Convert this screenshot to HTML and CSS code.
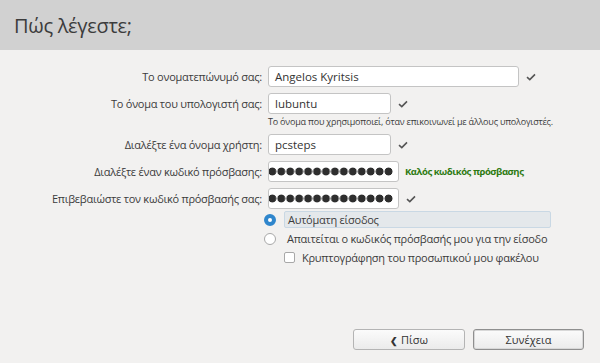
FILE: index.html
```html
<!DOCTYPE html>
<html lang="el">
<head>
    <meta charset="UTF-8">
    <title>Πώς λέγεστε;</title>
    <link rel="stylesheet" href="styles.css">
</head>
<body>
    <div class="titleBar">Πώς λέγεστε;</div>

    <div class="formArea">
        <div class="row">
            <label class="rowLabel">Το ονοματεπώνυμό σας:</label>
            <div class="field wide">Angelos Kyritsis</div>
            <svg class="check" width="10" height="8" viewBox="0 0 10 8"><path d="M1 4.2 L3.8 6.6 L9 1.4" fill="none" stroke="#555" stroke-width="1.6"/></svg>
        </div>
        <div class="row">
            <label class="rowLabel">Το όνομα του υπολογιστή σας:</label>
            <div class="field short">lubuntu</div>
            <svg class="check" width="10" height="8" viewBox="0 0 10 8"><path d="M1 4.2 L3.8 6.6 L9 1.4" fill="none" stroke="#555" stroke-width="1.6"/></svg>
        </div>
        <div class="hint">Το όνομα που χρησιμοποιεί, όταν επικοινωνεί με άλλους υπολογιστές.</div>
        <div class="row">
            <label class="rowLabel">Διαλέξτε ένα όνομα χρήστη:</label>
            <div class="field short">pcsteps</div>
            <svg class="check" width="10" height="8" viewBox="0 0 10 8"><path d="M1 4.2 L3.8 6.6 L9 1.4" fill="none" stroke="#555" stroke-width="1.6"/></svg>
        </div>
        <div class="row">
            <label class="rowLabel">Διαλέξτε έναν κωδικό πρόσβασης:</label>
            <div class="field pass"><span class="dots"></span></div>
            <span class="strength">Καλός κωδικός πρόσβασης</span>
        </div>
        <div class="row">
            <label class="rowLabel">Επιβεβαιώστε τον κωδικό πρόσβασής σας:</label>
            <div class="field pass"><span class="dots"></span></div>
            <svg class="check" width="10" height="8" viewBox="0 0 10 8"><path d="M1 4.2 L3.8 6.6 L9 1.4" fill="none" stroke="#555" stroke-width="1.6"/></svg>
        </div>

        <div class="options">
            <div class="option">
                <span class="radio on"></span>
                <span class="optionText focus">Αυτόματη είσοδος</span>
            </div>
            <div class="option">
                <span class="radio"></span>
                <span class="optionText">Απαιτείται ο κωδικός πρόσβασής μου για την είσοδο</span>
            </div>
            <div class="option sub">
                <span class="checkbox"></span>
                <span class="optionText">Κρυπτογράφηση του προσωπικού μου φακέλου</span>
            </div>
        </div>
    </div>

    <div class="buttons">
        <button class="navButton"><span class="arrow">&#10094;</span> Πίσω</button>
        <button class="navButton primary">Συνέχεια</button>
    </div>
</body>
</html>
```

FILE: styles.css
```css
body {
    margin: 0;
    width: 600px;
    height: 363px;
    overflow: hidden;
    background-color: #f2f1f0;
    font-family: 'Open Sans', 'Noto Sans', sans-serif;
    color: #3c3c3c;
}

.titleBar {
    height: 50px;
    box-sizing: border-box;
    padding: 12px 0 0 14px;
    background-color: #d1d1d1;
    font-size: 20px;
    letter-spacing: -0.3px;
    color: #3c3c3c;
}

.formArea {
    padding-top: 16px;
}

.row {
    display: flex;
    align-items: center;
    height: 21px;
    margin-bottom: 6px;
}

.rowLabel {
    width: 268px;
    padding-right: 6px;
    box-sizing: border-box;
    text-align: right;
    font-size: 11px;
    letter-spacing: -0.25px;
    color: #3c3c3c;
}

.field {
    height: 21px;
    box-sizing: border-box;
    border: 1px solid #c4c4c4;
    border-radius: 3px;
    background-color: #fff;
    padding: 0 6px;
    font-size: 11.5px;
    line-height: 19px;
    color: #333;
    overflow: hidden;
    white-space: nowrap;
}

.wide {
    width: 251px;
}

.short {
    width: 123px;
}

.pass {
    width: 131px;
    display: flex;
    align-items: center;
    justify-content: flex-end;
    padding: 0 5px 0 0;
}

/* masked password characters */
.dots {
    width: 124px;
    height: 9px;
    background-image: radial-gradient(circle, #2e2e2e 3.6px, transparent 4.3px);
    background-size: 8.95px 9px;
    background-position: right center;
    background-repeat: repeat-x;
}

.check {
    margin-left: 7px;
}

.strength {
    margin-left: 6px;
    font-size: 9.5px;
    font-weight: bold;
    color: #2e7a12;
    letter-spacing: -0.45px;
}

.hint {
    margin: -5px 0 6px 268px;
    font-size: 9px;
    letter-spacing: -0.2px;
    color: #3c3c3c;
}

.options {
    margin-left: 264px;
    margin-top: -4px;
}

.option {
    display: flex;
    align-items: center;
    height: 17px;
    margin-bottom: 2px;
    font-size: 11px;
    letter-spacing: -0.25px;
    color: #3c3c3c;
}

.optionText {
    padding: 0 3px;
    line-height: 15px;
}

.optionText.focus {
    width: 267px;
    box-sizing: border-box;
    border: 1px solid #c9d8e4;
    border-radius: 2px;
    background-color: #e4e8eb;
}

.radio {
    width: 12px;
    height: 12px;
    box-sizing: border-box;
    border: 1px solid #a8a8a8;
    border-radius: 50%;
    background-color: #fff;
    margin-right: 8px;
}

.radio.on {
    border: 4px solid #2f86cc;
    background-color: #fff;
}

.sub {
    padding-left: 20px;
}

.checkbox {
    width: 11px;
    height: 11px;
    box-sizing: border-box;
    border: 1px solid #a8a8a8;
    border-radius: 2px;
    background-color: #fff;
    margin-right: 4px;
}

.buttons {
    display: flex;
    justify-content: flex-end;
    gap: 8px;
    padding-right: 16px;
    margin-top: 63px;
}

.navButton {
    width: 112px;
    height: 21px;
    border: 1px solid #b4b4b4;
    border-radius: 3px;
    background: linear-gradient(#fbfbfb, #ebebeb);
    font-family: 'Open Sans', 'Noto Sans', sans-serif;
    font-size: 11px;
    color: #333;
    padding: 0;
}

.navButton.primary {
    width: 111px;
    border: 1px solid #8f8f8f;
    box-shadow: inset 0 0 0 1px #d8d8d8;
}

.arrow {
    font-size: 9px;
    font-weight: bold;
}
```
